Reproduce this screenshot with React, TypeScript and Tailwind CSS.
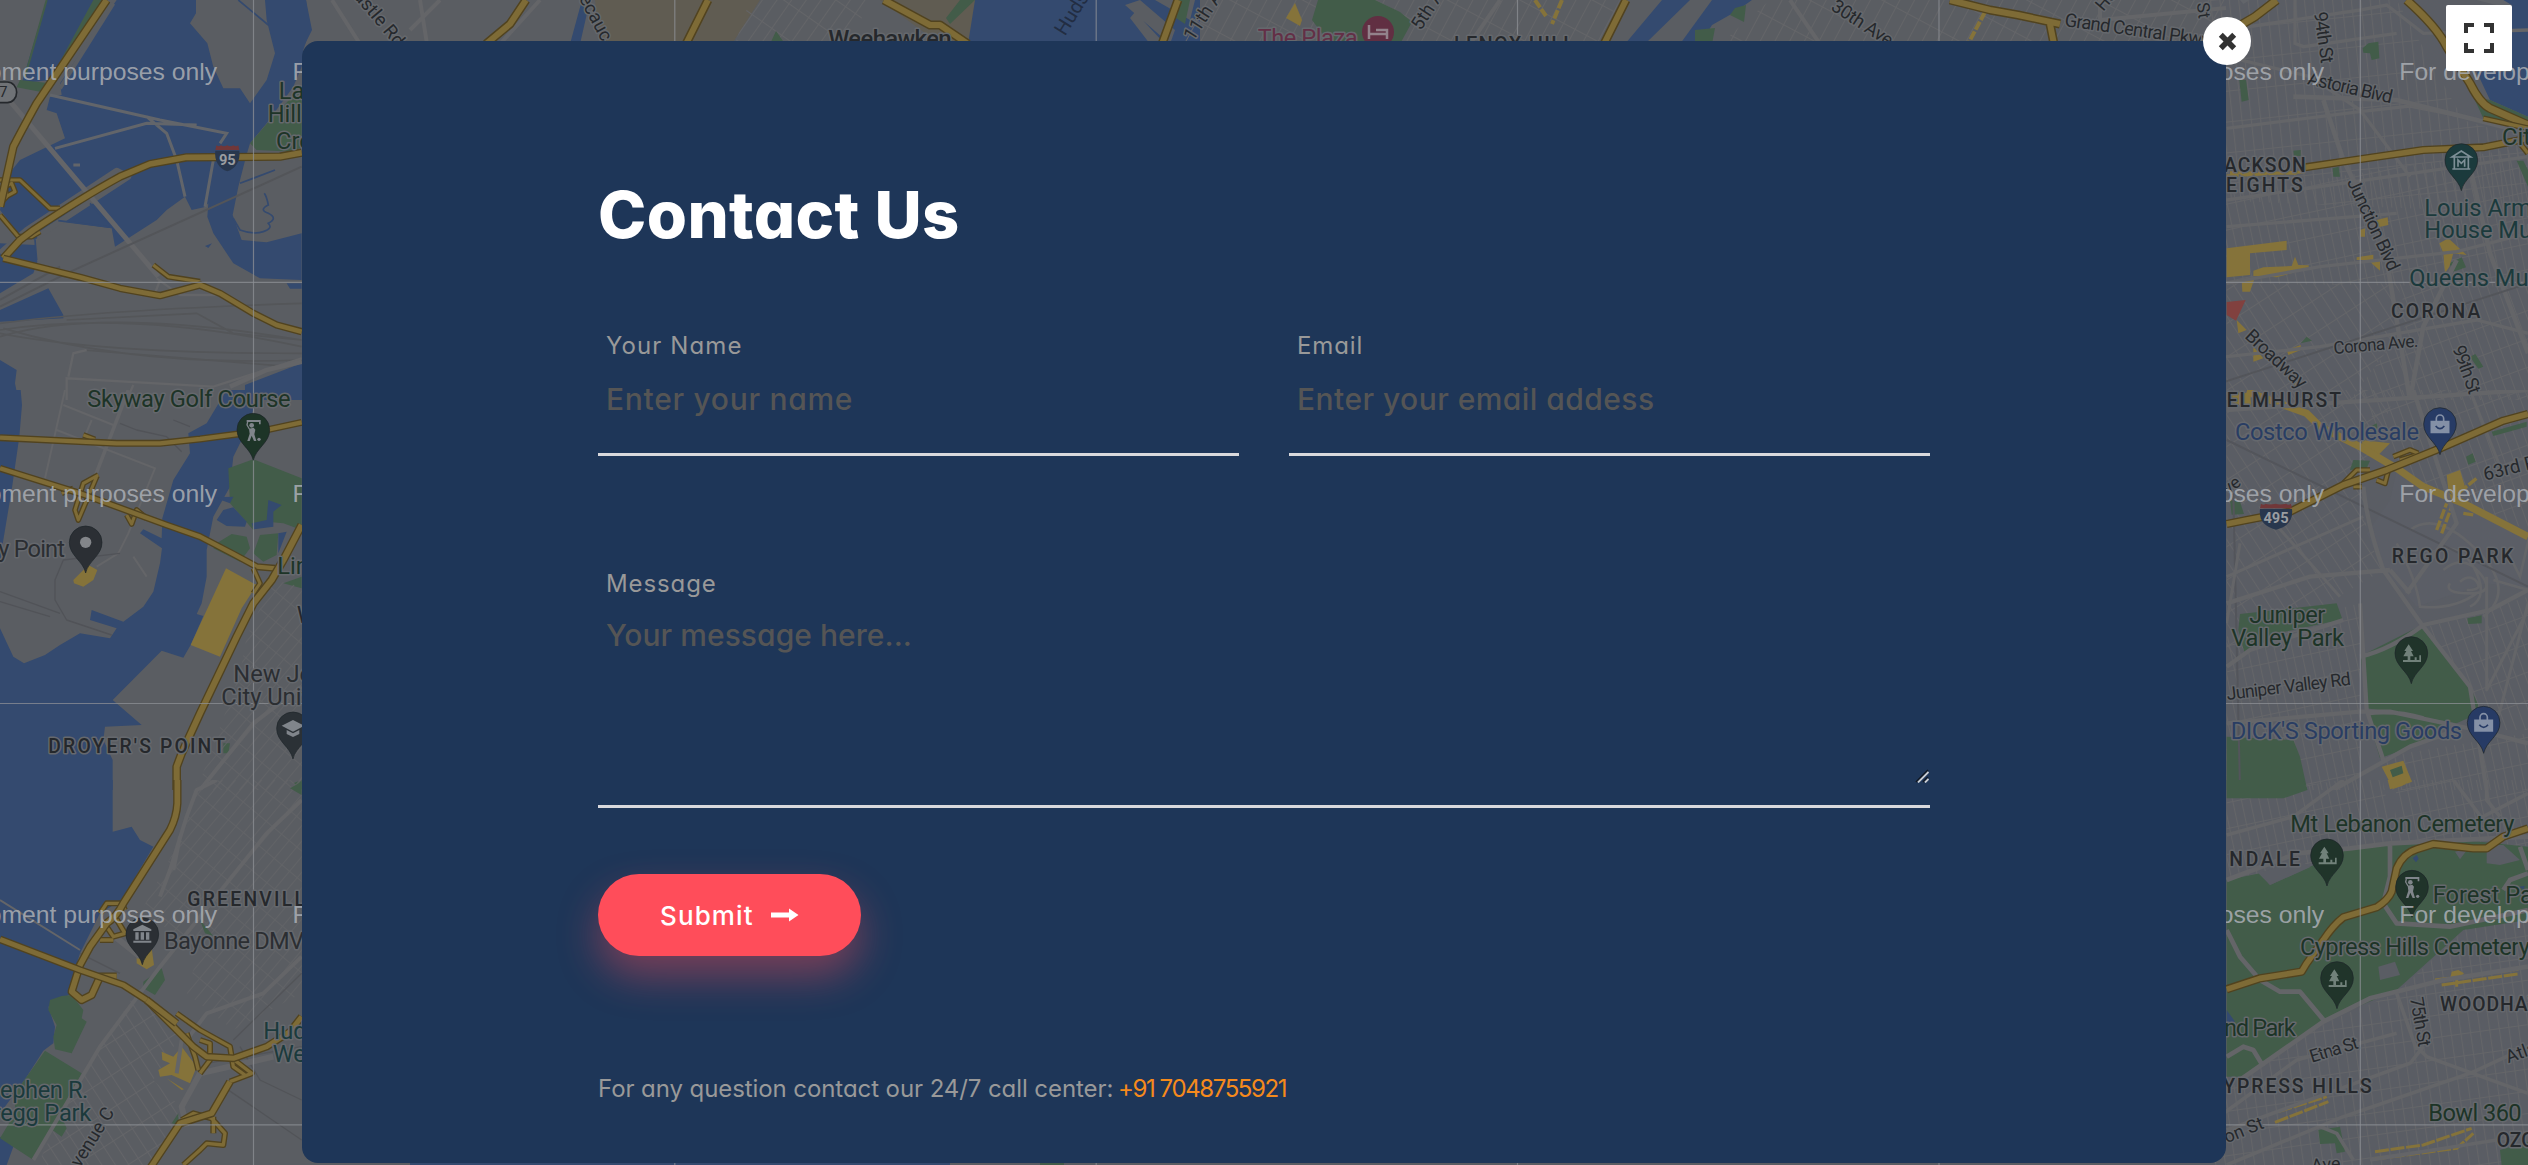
import React from "react";

const WATER = "#344a6f";
const LAND = "#5a5d62";
const PARK = "#425c49";
const GOLD = "#7e6b36";
const EDGE = "#51431f";
const STREET = "#646568";
const AREA = "#85733a";

/* Map tiles are drawn at three times their displayed size. */
function Tile({ id, x, y, w = 954, children }: { id: string; x: number; y: number; w?: number; children: React.ReactNode }) {
  return (
    <g transform={`translate(${x} ${y}) scale(0.33333)`}>
      <clipPath id={id}>
        <rect width={w} height={1200} />
      </clipPath>
      <g clipPath={`url(#${id})`}>{children}</g>
    </g>
  );
}

function Labels({ x, y, children }: { x: number; y: number; children: React.ReactNode }) {
  return <g transform={`translate(${x} ${y}) scale(0.33333)`}>{children}</g>;
}

function Hwy({ d, w = 18 }: { d: string; w?: number }) {
  return (
    <g fill="none" strokeLinejoin="round">
      <path d={d} stroke={EDGE} strokeWidth={w + 8} />
      <path d={d} stroke={GOLD} strokeWidth={w} />
    </g>
  );
}

/* Highways of the strip above the dialog, which is drawn at display size. */
function StripHwy({ d }: { d: string }) {
  return (
    <g fill="none" strokeLinejoin="round">
      <path d={d} stroke={EDGE} strokeWidth={9} />
      <path d={d} stroke={GOLD} strokeWidth={6} />
    </g>
  );
}

function Road({ d, w = 8, c = STREET }: { d: string; w?: number; c?: string }) {
  return <path d={d} fill="none" stroke={c} strokeWidth={w} strokeLinejoin="round" />;
}

type LabelProps = {
  x: number;
  y: number;
  children: string;
  len?: number;
  size?: number;
  color?: string;
  weight?: number;
  rot?: number;
  halo?: string;
};

function Label({ x, y, children, len, size = 71, color = "#25282c", weight = 400, rot = 0, halo = "#65686d" }: LabelProps) {
  return (
    <text
      x={x}
      y={y}
      textLength={len}
      fontFamily="Roboto, sans-serif"
      fontSize={size}
      fontWeight={weight}
      fill={color}
      stroke={halo}
      strokeWidth={9}
      strokeLinejoin="round"
      paintOrder="stroke"
      transform={rot ? `rotate(${rot} ${x} ${y})` : undefined}
    >
      {children}
    </text>
  );
}

function Pin({ x, y, fill, kind }: { x: number; y: number; fill: string; kind: "tree" | "golf" | "bag" | "dot" | "cap" | "bank" | "museum" }) {
  const c = kind === "tree" ? "#71817a" : "#80858b";
  return (
    <g transform={`translate(${x} ${y})`}>
      <path d="M0 92C-8 55-49 40-49 0a49 49 0 0 1 98 0C49 40 8 55 0 92Z" fill={fill} stroke="#1d2429" strokeWidth={2} />
      {kind === "tree" && (
        <path d="M-8-26l-13 20h6l-9 16h13v11h-14v6h54v-20h-5v14h-8v-8h-6v8h-13v-11h10l-8-16h6Z" fill={c} />
      )}
      {kind === "golf" && (
        <g fill={c}>
          <circle cx={-5} cy={-13} r={7} />
          <path d="M-20-29h42v13h-5v-7h-37ZM-13-3l14-3 5 6-3 14 6 20h-7L-5 18l-6 16h-7l7-22Z" />
          <path d="M-12-2l-7-12 2-9" fill="none" stroke={c} strokeWidth={4} />
          <circle cx={17} cy={29} r={5} />
        </g>
      )}
      {kind === "bag" && (
        <g fill="none" stroke="#8490a6" strokeWidth={5}>
          <path d="M-26-7h52v32h-52Z" fill="#8490a6" />
          <path d="M-11-8v-8a11 11 0 0 1 22 0v8" />
          <path d="M-13 6q13 16 26 0" stroke={fill} />
        </g>
      )}
      {kind === "dot" && <circle r={17} fill="#83868a" />}
      {kind === "cap" && <path d="M0-25l34 17L0 10l-34-18ZM-19 5L0 15 19 5v12L0 26l-19-9Z" fill={c} />}
      {kind === "bank" && <path d="M-27-14L0-28l27 14v5h-54ZM-21-5h10v22h-10ZM-5-5H5v22H-5ZM11-5h10v22H11ZM-27 20h54v6h-54Z" fill={c} />}
      {kind === "museum" && (
        <g fill="none" stroke="#7d8f96" strokeWidth={5}>
          <path d="M-28-9L0-27l28 18ZM-21-8v34M21-8v34M-27 27h54" />
          <path d="M-10 20V0L0 10 10 0v20" />
        </g>
      )}
    </g>
  );
}

function Shield({ x, y, s, label }: { x: number; y: number; s: number; label: string }) {
  return (
    <g transform={`translate(${x} ${y})`}>
      <path d={`M${-s}-18H${s}C${s + 4} 14 ${s - 12} 36 0 44C${12 - s} 36 ${-s - 4} 14 ${-s}-18Z`} fill="#28374e" />
      <path d={`M${3 - s}-34q8 6 14 0q8 5 ${s - 17} 0q8 5 ${s - 17} 0q6 6 14 0l3 14H${-s}Z`} fill="#713739" />
      <text y={24} textAnchor="middle" fontFamily="Roboto" fontWeight={700} fontSize={44} fill="#9a9da1">
        {label}
      </text>
    </g>
  );
}

function Grid({ id, w, h, rot, sw = 6 }: { id: string; w: number; h: number; rot: number; sw?: number }) {
  return (
    <pattern id={id} width={w} height={h} patternUnits="userSpaceOnUse" patternTransform={`rotate(${rot})`}>
      <path d={`M0 0H${w}M0 0V${h}`} stroke={STREET} strokeWidth={sw} />
    </pattern>
  );
}

const GREEN = "#1d3427";
const TEAL = "#1b3a3c";
const columns = [-168, 253.5, 674.8, 1096.2, 1517.5, 1939, 2360.3];
const rows = [282.3, 703.5, 1124.8];

function MapCanvas() {
  return (
    <svg className="absolute inset-0" width={2528} height={1165} viewBox="0 0 2528 1165" aria-hidden="true">
      <defs>
        <Grid id="g1" w={28} h={92} rot={-6} />
        <Grid id="g2" w={34} h={84} rot={-33} />
        <Grid id="g3" w={26} h={76} rot={-12} />
        <Grid id="g4" w={30} h={70} rot={40} />
        <Grid id="g5" w={27} h={80} rot={-20} />
        <Grid id="g6" w={29} h={66} rot={-8} />
        <Grid id="g7" w={12} h={30} rot={35} sw={2} />
        <Grid id="g8" w={13} h={34} rot={28} sw={2} />
      </defs>
      <rect width={2528} height={1165} fill={LAND} />
      <rect x={2200} width={328} height={1165} fill="#5a5d64" />

      <Tile id="nw" x={0} y={0} w={930}>
        <path
          fill={WATER}
          d="M140 0H285L150 240L65 250ZM350 0H588V40L570 70L622 130L640 200L670 265H720L750 310L800 240L825 160L800 60L795 0H918L930 90L910 150L905 200L880 260L800 370L750 430L738 470L715 560L698 645L725 720L800 727L905 700V840L780 835L700 790L640 700L622 650L625 610L612 622L575 630L555 590L500 630L470 660L345 740L335 685L170 662L105 720L55 700L0 630L20 530L60 480L195 415L170 340L140 330L150 290L185 285L180 250Z"
        />
        <path fill={WATER} d="M0 730L105 735L112 785L100 820L0 880ZM0 930L145 865L190 945V955L0 965ZM0 1080L50 1110L45 1150L55 1200H0ZM735 1155L930 1080V1200H735ZM860 850H905V866H870ZM615 738L636 730L625 744Z" />
        <path fill={PARK} d="M280 0H310L190 190L150 240ZM60 240L150 250L120 275L50 262ZM905 260L810 360L750 430L770 450L880 455L905 440Z" />
        <Road d="M140 0L75 230" w={6} c={PARK} />
        <Road d="M340 10L180 265" w={12} c={LAND} />
        <Road d="M0 760L80 690L350 512L385 530L110 710" w={18} c={LAND} />
        <path d="M715 0L805 75M700 655l20 35q40 15 70 5q30-10 15-25q30-15 0-30q-30-10 0-25q-5-25-12-35M720 550L825 510M175 662L335 682M270 610L345 690M105 720L110 780" fill="none" stroke={WATER} strokeWidth={5} />
        <path d="M150 285L480 360L680 400L660 430M165 445L440 370L590 375M440 350L500 400L530 480L555 590M640 480L615 620M220 495L240 495" fill="none" stroke="#62656a" strokeWidth={9} />
        <Road d="M10 280L475 830" w={15} />
        <Road d="M0 920L200 820L905 500M0 900L180 800" w={6} c="#535559" />
        <path d="M0 970Q300 930 905 910M0 990Q400 930 905 1040M0 1010Q300 920 905 1020M0 1000Q300 1060 905 1060M10 985Q400 1100 905 1080M200 960L590 940L700 1000L905 1020M250 1050L870 1100" fill="none" stroke="#545659" strokeWidth={5} />
        <path d="M470 835L540 885H650M480 840L465 880M200 1200V1135L640 1160L905 1075M205 1130L220 1060L260 1050M400 1155L380 1200" fill="none" stroke={STREET} strokeWidth={7} />
        <Road d="M690 1160L800 1110L905 1085" w={14} />
        <Hwy w={9} d="M0 540L25 540L60 540L150 625H180M0 600L45 575L35 550L15 560L20 590L0 610M0 645L55 710H95L120 695M460 795L505 830L600 845" />
        <Hwy d="M320 0L110 310Q60 400 40 440L0 620" />
        <Hwy d="M10 775L60 720L100 690Q250 590 360 530L450 492L560 472L840 470L905 458" w={17} />
        <Hwy d="M10 775L240 832L360 865L480 887L600 855L660 880L760 940L830 975L905 995" w={14} />
      </Tile>

      <Tile id="w" x={0} y={390} w={930}>
        <path
          fill={WATER}
          d="M0 0H62L66 45L58 140L35 300L10 450L0 520ZM680 0H790L760 60L735 130L700 200L690 290L640 380L620 480V560L605 640L590 672L610 678L572 765L550 803L485 782L338 930L425 1005L315 1010L310 1050L338 1110V1200H0V715L40 800L72 820L135 795L180 765L240 730L330 745L350 715L270 690L275 660L370 695L430 650L460 605L480 520L486 475L420 430L430 418L485 445L487 385L520 270L570 190L565 130L620 100Z"
        />
        <path fill={PARK} d="M760 208L905 265V420L850 400L800 395L760 420L690 340L685 235ZM650 460L695 432L740 440L750 475L720 515L640 475ZM780 435L835 430L830 495L790 515L760 490ZM850 580L905 560V595ZM670 1060H690L685 1090H670ZM880 1180L905 1170V1200Z" />
        <path fill={WATER} d="M650 390L670 360L700 352L740 395L735 410L680 408ZM755 400L800 390L805 330L845 345L820 365V410L760 418ZM835 430L860 425L835 490ZM640 322L700 320L690 340Z" />
        <path fill="url(#g4)" d="M820 570L905 590V1200H590L720 850L740 740Z" opacity={0.75} />
        <path fill={AREA} d="M678 535L770 585L725 655L660 800L572 765ZM220 570L265 525L292 540L280 570L250 590L222 580Z" />
        <path d="M195 0L135 265M190 45L340 105M170 120L465 235L385 430L355 490L290 530M275 90L250 150M400 500L440 560" fill="none" stroke={STREET} strokeWidth={6} />
        <Road d="M385 0L285 260" w={11} />
        <Road d="M360 490L190 510L165 570V630L200 690L335 735M0 605L180 670M0 635L150 680M360 100L410 120L500 140L545 185M520 90L570 110" w={4} c="#515358" />
        <Road d="M905 890L760 1000L600 1200" w={12} />
        <Hwy w={9} d="M295 255L250 280L225 360L235 390L290 260M185 310L220 295M380 375L395 402L410 360L440 385M250 135L285 148" />
        <Hwy d="M0 143L350 160H480L600 147L790 122L905 97" w={13} />
        <Hwy d="M0 235L240 310L500 405L600 440L700 492L770 530L825 535" w={13} />
        <Hwy d="M905 405L850 510L815 570L760 640L710 740L600 970L545 1090L530 1130V1200" w={18} />
        <Hwy d="M760 535L780 580L760 610" w={9} />
        <Shield x={-22} y={-372} s={36} label="9" />
      </Tile>

      <Tile id="sw" x={0} y={780} w={930}>
        <path fill="url(#g4)" d="M590 0H905V640L700 750L560 640L600 500L420 400L540 180Z" opacity={0.75} />
        <path fill="url(#g2)" d="M420 620L545 760L460 900L560 1000L440 1200H90L240 890Z" />
        <path fill={WATER} d="M0 0H338V155L395 140L420 180L460 200L365 360L300 400L240 520L215 600V640L145 680L165 740L160 790L130 812L80 890L45 940L0 1000ZM0 1070L40 1100L20 1155H0Z" />
        <path fill={PARK} d="M150 660L185 648L215 645L250 690L245 715L260 725L215 820L165 808L160 770L170 735L145 690ZM135 812L245 880L180 1000L200 1045L185 1070L150 1045L100 1140L0 1075L45 1000V940L80 890ZM430 605L485 565L495 600L465 645L430 625ZM870 25L905 5V45ZM600 420L640 468L615 460ZM515 1030L535 1000V1035Z" />
        <path fill={AREA} d="M545 800L590 860L570 910L515 885L480 890L475 870L510 850L487 840L485 815L520 830ZM500 895L552 928L545 930ZM410 530L455 505L462 555L440 568L410 550Z" />
        <Road d="M0 360L240 510" w={6} />
        <Road d="M240 520L360 580M620 850L905 800M905 580L700 780M720 800L780 900L905 960M670 920L905 1080" w={4} c="#525458" />
        <Road d="M905 60L800 160L680 310L480 560L300 800L100 1140M650 0L590 30L560 110L510 270L480 350M540 170L520 270M905 530L790 640L620 700L560 780M545 780L530 880" w={12} />
        <Road d="M345 470L420 530M560 1040L545 980L600 880L820 830" w={18} />
        <Hwy w={10} d="M300 400L320 370H365L375 390M320 440L340 470L375 460L345 410M300 480H340M530 700L600 750L690 800L700 860L735 885M600 780L630 790V840L600 880M560 760L585 830L595 870M690 830L755 880L690 905M545 1020L580 1000L635 1015L675 1060L670 1095L620 1090L600 1110L550 1155M640 1010L640 1060" />
        <Hwy d="M532 0V70Q530 110 510 150L370 370Q350 410 320 430L270 500L240 555L215 635L245 660L275 645L300 590L350 590" w={17} />
        <Hwy d="M0 478L240 570L370 615L440 660L580 800L620 830L700 835L800 800L870 755L905 710" w={15} />
        <Hwy d="M440 660L530 730M690 905L635 1000L540 1030L450 1165" w={16} />
      </Tile>

      <Tile id="ne" x={2210} y={0}>
        <path fill="url(#g1)" d="M0 0H560L760 360L954 420V640L0 600Z" />
        <path fill="url(#g3)" d="M0 590L954 440V860L0 850Z" />
        <path fill="url(#g2)" d="M50 850H560L600 960L420 1200H50Z" />
        <path fill="url(#g5)" d="M560 850L954 850V1200H420L600 960Z" />
        <path fill="#62656a" d="M90 0H120L100 12ZM800 0H954V40Z" />
        <path fill={WATER} d="M880 0H954V350L840 300L800 215H905V15Z" />
        <path fill={PARK} d="M458 145L475 130L505 125L508 175L485 180L480 160L460 158ZM88 240H108L116 300L95 305ZM790 290L840 300L954 350V375L820 355ZM250 452L272 450V468L252 468ZM368 505L386 500L390 530L370 530ZM920 482H940L954 510V560ZM718 790L755 772L768 802L730 815ZM272 1030L290 1010L306 1022ZM780 1070L796 1062L820 1100L805 1106Z" />
        <path fill={AREA} d="M50 745L230 722V750L120 760V825L50 832ZM95 840H132L120 875H97ZM130 812L160 802L245 798L255 770L265 795L296 796V805L200 832L130 828ZM688 730L715 715L770 765L730 760L718 800L705 820L700 760ZM440 772L490 764V780L440 780ZM500 660L533 652L535 675L505 682ZM450 690L465 685V710H450ZM480 785L510 780V812ZM80 960L110 990L85 1000ZM130 1040L160 1075L130 1085ZM230 1050L272 1035V1050L235 1065ZM250 1140L270 1135V1155H250Z" />
        <path fill="#81413f" d="M50 906L107 900L78 962L50 945Z" />
        <path d="M50 90L450 30L530 15L640 100L954 90M50 385L450 335L600 318L760 350M50 600L954 470M50 680L560 640M330 800L740 755L954 700M50 850L330 800M255 0V130L280 140L560 100M50 170L300 230L450 330L600 530M0 1075L330 1040L800 960L954 1000" fill="none" stroke={STREET} strokeWidth={10} />
        <Road d="M250 290L560 300L800 360L954 400M340 300L400 480L520 720L600 1200M780 500L840 760L954 1060M740 780L640 980L600 1200" w={14} />
        <Road d="M0 1160L954 850" w={6} c="#53555a" />
        <path d="M50 528L285 515M60 518L260 520" stroke={AREA} strokeWidth={9} strokeDasharray="36 6" />
        <Hwy d="M50 100L135 50L200 0" w={20} />
        <Hwy d="M590 0Q680 80 710 140L780 250Q810 310 840 325L954 375" w={20} />
        <Hwy d="M820 355L954 385M930 430L954 460" w={10} />
        <Hwy d="M285 502L400 485L640 450L820 442L954 415" w={16} />
      </Tile>

      <Tile id="e" x={2210} y={390}>
        <path fill="url(#g2)" d="M50 0H560L450 300L50 350Z" />
        <path fill="url(#g5)" d="M450 0H954V420L560 250Z" />
        <path fill="url(#g2)" d="M50 380L300 300L460 290L470 430L520 540L50 820Z" />
        <path fill="url(#g3)" d="M50 740L450 640V1200H50ZM520 1100L954 1030V1200H520Z" />
        <path fill="url(#g5)" d="M620 720L830 660L954 620V1020H800Z" />
        <path fill="#5b5e66" d="M470 430L540 330L560 240L954 440V600L830 580L620 650L520 540Z" />
        <path d="M560 460q60 110 70 190q100 10 170-40M600 420q80-60 200 60t20 200M640 500q100-60 150 30t-10 120M700 540q60-50 110 10t-30 60t-60-30M750 575q30-25 50 0t-30 25M850 570L954 600M890 480L930 560L960 430" fill="none" stroke={STREET} strokeWidth={8} />
        <path fill={PARK} d="M90 672L380 640L398 690L350 698L180 735L150 770L105 793L85 720ZM452 798L630 708L780 890L805 945L795 975L740 1000L600 975L470 955ZM470 970H590L700 1000L660 1050L510 1105ZM50 1040L250 1050L270 1100L292 1200H50ZM430 210L480 212L470 235L420 240ZM845 125L950 95V110L850 138ZM768 200L788 190L797 215L775 224ZM772 685L815 676V700L775 702ZM60 330L90 335L102 372L65 374ZM480 110L500 100L505 125H480Z" />
        <path fill={AREA} d="M710 255L750 240L765 290L735 325L715 300ZM455 150L540 160L500 200L460 180ZM515 1130L580 1112L606 1175L550 1197ZM50 5L120 10L125 60L50 30Z" />
        <path fill={PARK} d="M540 1140L575 1127L580 1150L548 1162Z" />
        <Road d="M110 5L290 70L330 110L450 170L560 235L640 290L760 340L954 440" w={22} c={AREA} />
        <path d="M680 420L710 340M695 430L725 350M720 330L800 265M760 370L790 375" stroke={AREA} strokeWidth={10} strokeDasharray="30 6" />
        <Road d="M50 150L954 590M70 310L90 1200" w={6} c="#53555b" />
        <Road d="M460 290Q470 400 520 540L640 710L780 890L830 1200M50 640L300 560L540 540M50 830L120 780L400 690M450 800Q540 780 640 705L840 660L954 600M450 640L470 960L520 1110M50 1000L450 965H540L800 1020L954 1060M370 1200L600 1070L740 1020M610 0L740 400L590 610M50 60L954 0M540 540L600 610M470 970Q560 960 640 985" w={13} />
        <Road d="M50 560L460 380M150 350L390 620M90 460L50 700M780 0L870 230L954 200M830 560V900L954 660M954 640L860 1000" w={9} />
        <Hwy w={9} d="M400 280L440 240H480M430 290H455M500 270L525 280L535 240M550 200L600 180L625 190M570 210L620 195" />
        <Hwy d="M50 402L110 390L240 365L300 335L400 285L530 240L690 175L880 92L954 72" w={17} />
      </Tile>

      <Tile id="se" x={2210} y={780}>
        <path fill="url(#g3)" d="M50 50L400 0H520L550 200L50 300ZM560 0H954V200L550 190Z" />
        <path fill={PARK} d="M50 0H280L292 30L220 55H50ZM50 300L150 280L180 315L300 260L400 210L540 190L760 180L954 200V420L760 450L560 630L340 725L100 890H50Z" />
        <path fill="url(#g6)" d="M110 890L340 730L560 640L760 450L954 420V1200H0V960Z" />
        <path fill="#5a5d64" d="M505 560L555 545L570 585L510 600ZM830 195H880L930 240L870 255L830 250ZM735 215L775 205L750 238ZM145 280L180 315L300 262L270 240Z" />
        <path fill={PARK} d="M325 1050L390 1040L405 1115L380 1120L375 1090L330 1092ZM870 1110L954 1085V1200H880Z" />
        <path fill={WATER} d="M608 235L620 225L626 236L618 247ZM925 320L945 318L940 328ZM50 690L75 725L50 730Z" />
        <path fill={AREA} d="M533 0H606L575 18L540 28ZM725 575L745 570L762 580L740 600L720 598Z" />
        <path d="M675 600L925 568M695 615L925 582M740 595V620M205 995L350 950M195 1027L355 965M495 1115L640 1095L785 1045M495 1137L740 1105L790 1060" fill="none" stroke={AREA} strokeWidth={9} strokeDasharray="42 5" />
        <Road d="M50 300L260 220L420 205L540 190L954 170M50 450L90 530L150 600L210 635H270L345 725M50 830L100 800L130 810L160 860M90 900L340 725L480 655L700 600L954 560M540 190V290L520 370L560 430L720 440L954 390M880 330L900 300L954 280M930 200L954 270" w={14} />
        <Road d="M50 1155L400 1010L780 880L954 800M50 1050L600 850L640 800M330 1040L380 1060L430 1140M620 800L650 830L954 940M560 640L620 810M0 1030L260 840L560 760M400 0L250 110L50 165M730 0L820 120M830 0V60L870 110M954 40L780 130M480 1140L860 1080" w={11} />
        <Hwy d="M50 628L150 595L275 575L290 550L340 480Q370 435 400 412L500 382Q535 360 545 335L560 265Q580 220 620 208L670 192L790 205H830L880 170L954 145" w={17} />
      </Tile>

      {/* Strip above the dialog */}
      <path d="M595 0H675V44H600Z" fill="#605c52" />
      <path d="M675 0H760L732 44H675ZM880 0H985L970 44H940Z" fill="#605c52" />
      <path d="M300 0H306L312 30L305 44H300ZM975 0H1200V44H968ZM582 0H590L580 44H570ZM1662 0H1752L1735 12L1712 25L1700 44H1625Z" fill={WATER} />
      <path d="M1135 12L1165 44H1150L1130 18ZM1140 0L1175 30L1170 44L1125 5ZM1155 0H1195L1190 20Z" fill={LAND} />
      <path d="M750 0H870L850 44H735Z" fill="url(#g7)" />
      <path d="M1200 0H1620L1600 44H1180ZM1770 0H2226V44H1720Z" fill="url(#g8)" />
      <path d="M1690 0H1712L1680 44H1645Z" fill={LAND} />
      <path d="M1318 0H1375L1400 12L1412 22L1400 44H1330L1312 20ZM1735 8L1746 5L1744 22L1730 15ZM1695 30L1715 28L1712 44H1695ZM960 0H975L950 24L946 18ZM1175 0H1190L1185 24L1170 14ZM770 44L776 31L785 44Z" fill={PARK} />
      <path d="M1295 3L1302 20L1300 26L1286 18Z" fill={AREA} />
      <path d="M1535 0L1546 16M1562 0L1552 24M1985 12L1968 44" stroke={AREA} strokeWidth={4} strokeDasharray="9 2" />
      <path d="M332 0L360 44M420 0L427 44M440 0L410 30M540 0L500 44M1500 0L1470 44M2100 0V20L2226 8M1790 0L1820 44" stroke={STREET} strokeWidth={4} fill="none" />
      <StripHwy d="M526 0L510 24L486 44M708 0L686 44M884 0L930 25H940L968 44M1178 0L1162 44M1626 0L1604 44M1950 0L1990 10L2018 15L2060 24M2050 24L2054 44" />
      <circle cx={1378} cy={32} r={16} fill="#612f42" />
      <path d="M1369 25v14m0-5h18v5m-11-9h11v5" fill="none" stroke="#93828b" strokeWidth={2.5} />

      {/* Sliver below the dialog */}
      <path d="M410 1162H950V1165H410Z" fill={WATER} />
      <path d="M1040 1162H1064V1165H1040Z" fill={PARK} />

      {/* Tile borders */}
      <g stroke="#8d9095" strokeOpacity={0.75} strokeWidth={1.2}>
        {columns.slice(1).map((x) => (
          <path key={x} d={`M${x} 0V1165`} />
        ))}
        {rows.map((y) => (
          <path key={y} d={`M0 ${y}H2528`} />
        ))}
      </g>

      <Labels x={0} y={0}>
        <path d="M-30 246H22a28 31 0 0 1 0 62H-30Z" fill="#6f7276" stroke="#25282c" strokeWidth={5} />
        <Label x={-2} y={291} size={44} halo="none">7</Label>
        <Shield x={682} y={470} s={36} label="95" />
        <Label x={836} y={296} color={GREEN}>Lafa</Label>
        <Label x={803} y={366} color={GREEN}>Hill</Label>
        <Label x={828} y={446} color={GREEN}>Cre</Label>
        <Label x={262} y={1220} len={610} color={GREEN}>Skyway Golf Course</Label>
      </Labels>
      <Labels x={0} y={390}>
        <Label x={-5} y={502} len={200} color="#2b2e32">y Point</Label>
        <Label x={832} y={552} color={GREEN}>Linc</Label>
        <Label x={890} y={700}>W</Label>
        <Label x={700} y={877} color="#2b2e32">New Jers</Label>
        <Label x={664} y={945} color="#2b2e32">City Univ</Label>
        <Label x={145} y={1090} len={530} size={58} weight={500}>DROYER'S POINT</Label>
        <Pin x={760} y={119} fill={GREEN} kind="golf" />
        <Pin x={257} y={457} fill="#2b2f34" kind="dot" />
        <Pin x={879} y={1015} fill="#2b3136" kind="cap" />
      </Labels>
      <Labels x={0} y={780}>
        <Label x={562} y={379} len={392} size={58} weight={500}>GREENVILLE</Label>
        <Label x={492} y={508} len={420} color="#2b2e32">Bayonne DMV</Label>
        <Label x={790} y={777} color={TEAL}>Huds</Label>
        <Label x={818} y={846} color={TEAL}>West</Label>
        <Label x={0} y={954} len={265} color={TEAL}>ephen R.</Label>
        <Label x={-22} y={1022} len={296} color={TEAL}>regg Park</Label>
        <Label x={240} y={1165} size={56} rot={-58}>venue C</Label>
        <Pin x={427} y={462} fill="#2b2f34" kind="bank" />
      </Labels>
      <Labels x={2210} y={0}>
        <Label x={312} y={38} len={155} size={56} rot={82}>94th St</Label>
        <Label x={290} y={252} len={260} size={56} rot={13}>Astoria Blvd</Label>
        <Label x={42} y={517} len={245} size={58} weight={500}>ACKSON</Label>
        <Label x={48} y={577} len={230} size={58} weight={500}>EIGHTS</Label>
        <Label x={410} y={545} len={300} size={56} rot={65}>Junction Blvd</Label>
        <Label x={876} y={434} color={GREEN}>Citi</Label>
        <Label x={643} y={647} color={TEAL}>Louis Armst</Label>
        <Label x={643} y={715} color={TEAL}>House Mus</Label>
        <Label x={598} y={858} color={TEAL}>Queens Muse</Label>
        <Label x={543} y={953} len={268} size={58} weight={500}>CORONA</Label>
        <Label x={102} y={1012} len={230} size={56} rot={43}>Broadway</Label>
        <Label x={372} y={1062} len={255} size={52} rot={-5}>Corona Ave.</Label>
        <Label x={727} y={1045} len={150} size={56} rot={70}>99th St</Label>
        <Pin x={754} y={480} fill={TEAL} kind="museum" />
      </Labels>
      <Labels x={2210} y={390}>
        <Label x={50} y={52} len={343} size={58} weight={500}>ELMHURST</Label>
        <Label x={75} y={150} len={552} color="#293d63">Costco Wholesale</Label>
        <Label x={825} y={272} size={56} rot={-14}>63rd R</Label>
        <Label x={55} y={315} size={52} rot={-38}>ve</Label>
        <Shield x={198} y={375} s={48} label="495" />
        <Label x={545} y={519} len={365} size={58} weight={500}>REGO PARK</Label>
        <Label x={118} y={699} len={228} color={GREEN}>Juniper</Label>
        <Label x={64} y={767} len={338} color={GREEN}>Valley Park</Label>
        <Label x={52} y={930} len={375} size={54} rot={-7}>Juniper Valley Rd</Label>
        <Label x={62} y={1046} len={694} color="#293d63">DICK'S Sporting Goods</Label>
        <Pin x={690} y={102} fill="#273b65" kind="bag" />
        <Pin x={604} y={789} fill="#20342a" kind="tree" />
        <Pin x={821} y={998} fill="#273b65" kind="bag" />
      </Labels>
      <Labels x={2210} y={780}>
        <Pin x={351} y={226} fill="#20342a" kind="tree" />
        <Pin x={606} y={320} fill="#20342a" kind="golf" />
        <Pin x={381} y={594} fill="#20342a" kind="tree" />
        <Label x={241} y={156} len={672} color={GREEN}>Mt Lebanon Cemetery</Label>
        <Label x={58} y={258} len={212} size={58} weight={500}>NDALE</Label>
        <Label x={668} y={370} color={GREEN}>Forest Par</Label>
        <Label x={270} y={524} len={690} color={GREEN}>Cypress Hills Cemetery</Label>
        <Label x={42} y={768} len={215} color={GREEN}>nd Park</Label>
        <Label x={690} y={694} len={380} size={58} weight={500}>WOODHAVEN</Label>
        <Label x={600} y={655} len={150} size={56} rot={80}>75th St</Label>
        <Label x={305} y={848} len={150} size={54} rot={-17}>Etna St</Label>
        <Label x={895} y={850} size={54} rot={-20}>Atlan</Label>
        <Label x={40} y={940} len={445} size={58} weight={500}>YPRESS HILLS</Label>
        <Label x={655} y={1022} len={280} color={GREEN}>Bowl 360</Label>
        <Label x={860} y={1102} size={58} weight={500}>OZO</Label>
        <Label x={50} y={1090} size={54} rot={-22}>on St</Label>
        <Label x={305} y={1175} size={54} rot={-5}>Ave</Label>
      </Labels>
      <Labels x={0} y={0}>
        <Label x={1060} y={-10} size={56} rot={50}>astle Rd</Label>
        <Label x={1736} y={-5} size={56} rot={62}>ecauc</Label>
        <Label x={2485} y={140} size={72} weight={500} len={370}>Weehawken</Label>
        <Label x={3195} y={110} size={60} rot={-58} color="#222d42" halo="none">Huds</Label>
        <Label x={3580} y={125} size={56} rot={-57}>11th Av</Label>
        <Label x={3773} y={138} len={300} color="#632f46">The Plaza</Label>
        <Label x={4262} y={94} size={56} rot={-57}>5th A</Label>
        <Label x={4362} y={153} len={360} size={60} weight={500}>LENOX HILL</Label>
        <Label x={5490} y={28} len={208} size={56} rot={33}>30th Ave</Label>
        <Label x={6192} y={78} len={440} size={56} rot={8}>Grand Central Pkwy</Label>
        <Label x={6310} y={35} size={52} rot={-50}>Ha</Label>
        <Label x={6590} y={10} size={52} rot={82}>St</Label>
      </Labels>

      <g fill="#a7abb1" fillOpacity={0.9} fontFamily="Liberation Sans, Arial, sans-serif" fontSize={24}>
        {rows.map((y) =>
          columns.map((x) => (
            <text key={`${x}-${y}`} x={x + 39} y={y - 202} textLength={346} lengthAdjust="spacingAndGlyphs">
              For development purposes only
            </text>
          )),
        )}
      </g>
    </svg>
  );
}

const labelText = "relative top-px pl-2 text-[24px] leading-[36px] text-[#999999]";
const fieldText =
  "block w-full border-b-[3px] border-[#d9d9dc] bg-transparent px-2 text-[30px] font-medium text-white outline-none placeholder:text-[#555555] placeholder:opacity-100";

function ContactDialog() {
  return (
    <section className="relative mt-[41px] ml-[302px] h-[1122px] w-[1924px] rounded-[16px] bg-[#1e3658] px-[296px] pt-[131px] [font-feature-settings:'cv11']">
      <button
        aria-label="Close"
        className="absolute -top-[24px] -right-[25px] flex size-[48px] items-center justify-center rounded-full bg-white"
      >
        <svg width="19" height="19" viewBox="0 0 17 17">
          <path d="M2.5 2.5l12 12M14.500 2.5L2.5 14.500" stroke="#333333" strokeWidth="5" />
        </svg>
      </button>

      <h1 className="h-[85px] text-[65px] leading-[85px] font-extrabold tracking-[0.4px] whitespace-nowrap text-white">Contact Us</h1>

      <form>
        <div className="mt-[70px] grid grid-cols-2 gap-[50px]">
          <label className="block">
            <span className={`${labelText} block tracking-[1.1px]`}>Your Name</span>
            <input className={`${fieldText} h-[93px] pb-[18px] tracking-[0.7px]`} placeholder="Enter your name" />
          </label>
          <label className="block">
            <span className={`${labelText} block tracking-[0.9px]`}>Email</span>
            <input className={`${fieldText} h-[93px] pb-[18px] tracking-[0.45px]`} placeholder="Enter your email addess" />
          </label>
        </div>

        <label className="mt-[109px] block">
          <span className={`${labelText} block tracking-[0.9px]`}>Message</span>
          <span className="relative block">
            <textarea
              className={`${fieldText} h-[207px] resize-none pt-[12px] leading-[44px] tracking-[0.05px]`}
              placeholder="Your message here..."
            />
            <svg className="absolute right-[1px] bottom-[25px]" width="14" height="14" viewBox="0 0 14 14">
              <path d="M1 13L13 1M8 13L13 8" stroke="#101722" strokeWidth="1.6" />
              <path d="M3 13.5L13.5 3M10 13.5L13.5 10" stroke="#c9cdd3" strokeWidth="1.8" />
            </svg>
          </span>
        </label>

        <button
          type="button"
          className="mt-[66px] flex h-[82px] w-[263px] items-center rounded-full bg-[#ff4d5a] pl-[62px] text-[26px] font-medium text-white shadow-[0_20px_40px_rgba(255,77,90,0.4)]"
        >
          <span className="w-[111px] text-left tracking-[1.1px]">Submit</span>
          <svg width="28" height="14" viewBox="0 0 28 14">
            <path d="M0 4.6h18V0.5L27.5 7 18 13.5V9.4H0Z" fill="#ffffff" />
          </svg>
        </button>
      </form>

      <p className="mt-[115px] text-[24px] leading-[36px] tracking-[-0.08px] whitespace-nowrap text-[#999999]">
        For any question contact our 24/7 call center: <a className="-ml-[2px] tracking-[-1.4px] text-[#f58a1c]">+91 7048755921</a>
      </p>
    </section>
  );
}

export default function App() {
  return (
    <main className="relative h-[1165px] w-[2528px] overflow-hidden font-['Inter',sans-serif]">
      <MapCanvas />
      <ContactDialog />
      <button
        aria-label="Toggle fullscreen view"
        className="absolute top-[5px] right-[16px] flex size-[66px] items-center justify-center rounded-[2px] bg-white"
      >
        <svg width="30" height="30" viewBox="0 0 30 30" fill="none" stroke="#333333" strokeWidth="4">
          <path d="M2 10V2H10M20 2H28V10M28 20V28H20M10 28H2V20" />
        </svg>
      </button>
    </main>
  );
}
